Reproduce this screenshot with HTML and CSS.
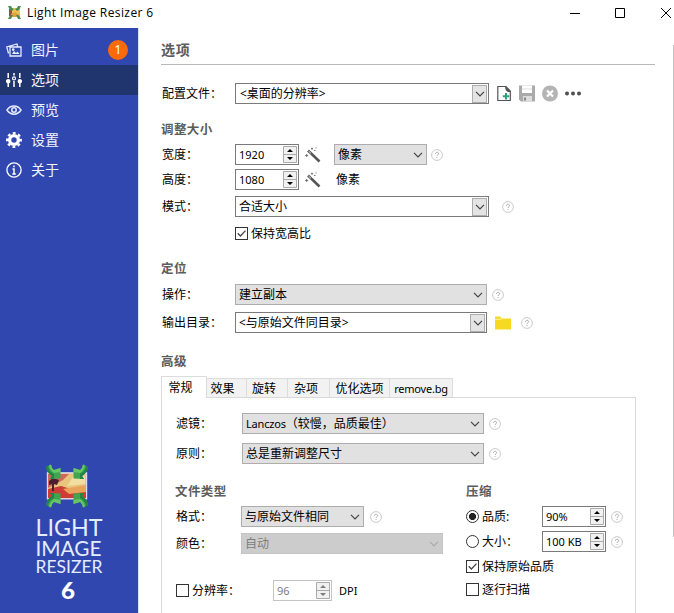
FILE: index.html
```html
<!DOCTYPE html>
<html lang="zh-CN">
<head>
<meta charset="utf-8">
<title>Light Image Resizer 6</title>
<link rel="stylesheet" href="styles.css">
</head>
<body>
<svg class="defs" aria-hidden="true">
  <symbol id="logo" viewBox="0 0 44 44">
    <path d="M2 8.5H42V35H2Z" fill="#e8c57c"/>
    <path d="M3 10H24L18 16 3 24Z" fill="#d0675a"/>
    <path d="M3 25L16 22 29 26 41 24V34H3Z" fill="#cc3d38"/>
    <path d="M18 25L41 21V28L24 30Z" fill="#e9a35a"/>
    <path d="M4 17L8 14 14 16 12 21 9 20V27H7V20L4 21Z" fill="#4b1f2c"/>
    <path d="M28 13L40 12V20L22 22Z" fill="#f1deA0"/>
    <path d="M5 8.8H2.4V34.8H5M39 8.8H41.6V34.8H39M15 8.8H29M15 34.8H29" stroke="#dcdcf5" stroke-width="1.2" fill="none"/>
    <g id="arrow"><path d="M1 3L6 .5Q7 5 9 6L15.500 4V14.500L5 15 7 12Q2 9 1 3Z" fill="#3fa650"/><path d="M6 .5Q7 5 9 6L15.500 4V8L9 9Q5 6 4 1.500Z" fill="#69c665"/><path d="M1 3Q2 9 7 12L5 15 9 14.800V10Q4 8 3 2Z" fill="#1f8446"/></g>
    <use href="#arrow" transform="translate(44 0) scale(-1 1)"/>
    <use href="#arrow" transform="translate(0 44) scale(1 -1)"/>
    <use href="#arrow" transform="translate(44 44) scale(-1 -1)"/>
  </symbol>
  <symbol id="logo-small" viewBox="0 0 13 13">
    <path d="M1 2H12V11H1Z" fill="#ecc65a"/>
    <path d="M1 3H4V10H1Z" fill="#9a5137"/>
    <path d="M3 8L7 6 12 9V11H3Z" fill="#e5a13d"/>
    <path d="M0 0H3L4 2 6 3 4 5 2 4ZM13 0H10L9 2 7 3 9 5 11 4ZM0 13H3L4 11 5 9 3 9 1 11ZM13 13H10L9 11 8 9 10 9 12 11Z" fill="#4a8c55"/>
  </symbol>
  <symbol id="help" viewBox="0 0 12 12">
    <circle cx="6" cy="6" r="5.4" fill="#fff" stroke="#c4c4c4" stroke-width=".9"/>
    <path d="M4.400 4.900C4.400 2.800 7.600 2.800 7.600 4.700 7.600 5.800 6 5.800 6 7M6 8.100V9" fill="none" stroke="#aaa" stroke-width="1"/>
  </symbol>
  <symbol id="wand" viewBox="0 0 16 16">
    <path d="M3 3.500L14.500 14.500" stroke="#555" stroke-width="2.500"/>
    <path d="M3.500 4L6 6.400" stroke="#fff" stroke-width=".8"/>
    <path d="M.2 8.500H3.200M1.700 7V10M6 1.700H8M7 .7V2.700M10.500 1H11.500M9 3.500H10.500" stroke="#777" stroke-width="1"/>
  </symbol>
  <symbol id="chev" viewBox="0 0 10 6"><path d="M1 .8L5 4.800 9 .8" fill="none" stroke="currentColor" stroke-width="1.200"/></symbol>
  <symbol id="spin" viewBox="0 0 14 17">
    <path d="M.5 .5H13.500V16.500H.5ZM.5 8.500H13.500" fill="#f1f1f1" stroke="#aaa"/>
    <path d="M4 6H10L7 3ZM4 11H10L7 14Z" fill="currentColor"/>
  </symbol>
  <symbol id="tick" viewBox="0 0 13 13"><path d="M2.700 6.300L5.400 9 10.500 3.600" fill="none" stroke="#444" stroke-width="1.300"/></symbol>
</svg>

<div class="window">
  <header class="titlebar">
    <svg class="app-icon"><use href="#logo-small"/></svg>
    <span class="app-title">Light Image Resizer 6</span>
    <svg class="window-controls" viewBox="0 0 102 12" fill="none" stroke="#000"><path d="M0 6.500H10M45.500 1.500H54.500V10.500H45.500ZM91 1L101 11M101 1L91 11"/></svg>
  </header>
  <div class="body">
    <nav class="sidebar">
      <ul class="menu">
        <li class="item"><svg viewBox="0 0 16 16" fill="none" stroke="#e6ecff" stroke-width="1.300"><path d="M4 14H15V5H4ZM2.500 11.500L.8 5 11 2 11.600 4.500"/><path d="M6 12L8 9 10 11 11.500 9.500 13.500 12Z" fill="#e6ecff" stroke="none"/><circle cx="7.200" cy="7.600" r=".7"/></svg><span>图片</span><b class="badge">1</b></li>
        <li class="item active"><svg viewBox="0 0 16 16" fill="none" stroke="#fff" stroke-width="1.500"><path d="M2.200 1V6M2.200 11V15M8 1V3.500M8 9V15M13.800 1V6M13.800 11V15"/><circle cx="2.200" cy="9.200" r="1.500" fill="#fff"/><circle cx="8" cy="6.400" r="1.500" stroke-width="1.200"/><circle cx="13.800" cy="9.200" r="1.500" fill="#fff"/></svg><span>选项</span></li>
        <li class="item"><svg viewBox="0 0 16 16" fill="none" stroke="#e6ecff" stroke-width="1.500"><path d="M1 8C4.500 2.500 11.500 2.500 15 8 11.500 13.500 4.500 13.500 1 8Z"/><circle cx="8" cy="8" r="2.200"/></svg><span>预览</span></li>
        <li class="item"><svg viewBox="0 0 16 16" fill="none" stroke="#fff"><circle cx="8" cy="8" r="4.400" stroke-width="3.400"/><circle cx="8" cy="8" r="6.900" stroke-width="2.100" stroke-dasharray="2.900 2.520" stroke-dashoffset="1.450"/></svg><span>设置</span></li>
        <li class="item"><svg viewBox="0 0 16 16" fill="none" stroke="#fff"><circle cx="8" cy="8" r="7.100" stroke-width="1.300"/><path d="M6.500 7H8V12M6.300 12H9.800M8 3.600V5.300" stroke-width="1.500"/></svg><span>关于</span></li>
      </ul>
      <div class="brand">
        <svg class="brand-logo"><use href="#logo"/></svg>
        <svg class="brand-name" viewBox="0 0 70 97">
          <text x="1.500" y="24" font-size="24" textLength="67" lengthAdjust="spacingAndGlyphs">LIGHT</text>
          <text x="1.500" y="43.500" font-size="20.500" textLength="66" lengthAdjust="spacingAndGlyphs">IMAGE</text>
          <text x="1.500" y="61" font-size="17" textLength="67" lengthAdjust="spacingAndGlyphs">RESIZER</text>
          <text class="brand-version" x="27" y="87" font-size="22" textLength="14" lengthAdjust="spacingAndGlyphs">6</text>
        </svg>
      </div>
    </nav>

    <main class="main">
      <h1>选项</h1>
      <div class="row profile">
        <label>配置文件：</label>
        <div class="combo w254 indent"><span>&lt;桌面的分辨率&gt;</span><i><svg><use href="#chev"/></svg></i></div>
        <svg class="tools" viewBox="0 0 84 18">
          <path d="M.8 1.500H9L13.300 6V15.500H.8Z" fill="#fff" stroke="#555" stroke-width="1.200"/><path d="M8 1L14 7H11Q8 6 8 1Z" fill="#555"/><path d="M9 8V14.500M5.800 11.200H12.200" stroke="#27a477" stroke-width="2"/>
          <path d="M22 .5H38V16.500H24L22 14.500Z" fill="#aaa"/><path d="M25 .5H35V8H25Z" fill="#fff"/><path d="M25 4H35" stroke="#ddd"/><path d="M26 11H35V16.500H26Z" fill="#ddd"/><path d="M27 12.500H29V15.500H27Z" fill="#888"/>
          <circle cx="53" cy="8.500" r="8" fill="#b4b4b4"/><path d="M50 5.500L56 11.500M56 5.500L50 11.500" stroke="#fff" stroke-width="2.200"/>
          <circle cx="70" cy="8.500" r="2" fill="#505050"/><circle cx="76" cy="8.500" r="2" fill="#505050"/><circle cx="82" cy="8.500" r="2" fill="#505050"/>
        </svg>
      </div>

      <h2 class="h-size">调整大小</h2>
      <div class="row">
        <label>宽度：</label>
        <div class="spinner"><span>1920</span><svg><use href="#spin"/></svg></div>
        <svg class="wand"><use href="#wand"/></svg>
        <div class="select w93"><span>像素</span><svg><use href="#chev"/></svg></div>
        <svg class="help near"><use href="#help"/></svg>
      </div>
      <div class="row height-row">
        <label>高度：</label>
        <div class="spinner"><span>1080</span><svg><use href="#spin"/></svg></div>
        <svg class="wand"><use href="#wand"/></svg>
        <span class="unit">像素</span>
      </div>
      <div class="row mode">
        <label>模式：</label>
        <div class="combo w254"><span>合适大小</span><i><svg><use href="#chev"/></svg></i></div>
        <svg class="help far"><use href="#help"/></svg>
      </div>
      <div class="row ratio"><span class="check"><svg><use href="#tick"/></svg></span><span>保持宽高比</span></div>

      <h2 class="h-dest">定位</h2>
      <div class="row">
        <label>操作：</label>
        <div class="select w252"><span>建立副本</span><svg><use href="#chev"/></svg></div>
        <svg class="help"><use href="#help"/></svg>
      </div>
      <div class="row output">
        <label>输出目录：</label>
        <div class="combo w252"><span>&lt;与原始文件同目录&gt;</span><i><svg><use href="#chev"/></svg></i></div>
        <svg class="folder" viewBox="0 0 16 14"><path d="M0 .5H5L7 2.500H16V13.500H0Z" fill="#f8d922"/><path d="M0 3.300H6L7.500 2" fill="none" stroke="#fff09a"/></svg>
        <svg class="help after-folder"><use href="#help"/></svg>
      </div>

      <h2 class="h-adv">高级</h2>
      <div class="tabs">
        <span class="tab on">常规</span><span class="tab t40">效果</span><span class="tab t41">旋转</span><span class="tab t42">杂项</span><span class="tab t60">优化选项</span><span class="tab t63"><span class="latin">remove.bg</span></span>
      </div>
      <section class="panel">
        <div class="row">
          <label>滤镜：</label>
          <div class="select w242"><span><span class="latin">Lanczos</span>（较慢，品质最佳）</span><svg><use href="#chev"/></svg></div>
          <svg class="help"><use href="#help"/></svg>
        </div>
        <div class="row rule">
          <label>原则：</label>
          <div class="select w242"><span>总是重新调整尺寸</span><svg><use href="#chev"/></svg></div>
          <svg class="help"><use href="#help"/></svg>
        </div>
        <div class="columns">
          <div class="file-type">
            <h2>文件类型</h2>
            <div class="row">
              <label>格式：</label>
              <div class="select w123"><span>与原始文件相同</span><svg><use href="#chev"/></svg></div>
              <svg class="help format-help"><use href="#help"/></svg>
            </div>
            <div class="row color">
              <label>颜色：</label>
              <div class="select w202 disabled"><span>自动</span><svg><use href="#chev"/></svg></div>
            </div>
            <div class="row resolution">
              <span class="check"></span><span class="res-label">分辨率：</span>
              <div class="spinner disabled"><span>96</span><svg><use href="#spin"/></svg></div>
              <span class="dpi">DPI</span>
            </div>
          </div>
          <div class="compression">
            <h2>压缩</h2>
            <div class="row">
              <span class="radio on"></span><span class="radio-label">品质:</span>
              <div class="spinner"><span>90%</span><svg><use href="#spin"/></svg></div>
              <svg class="help"><use href="#help"/></svg>
            </div>
            <div class="row size">
              <span class="radio"></span><span class="radio-label">大小：</span>
              <div class="spinner"><span>100 KB</span><svg><use href="#spin"/></svg></div>
              <svg class="help"><use href="#help"/></svg>
            </div>
            <div class="row keep"><span class="check"><svg><use href="#tick"/></svg></span><span>保持原始品质</span></div>
            <div class="row scan"><span class="check"></span><span>逐行扫描</span></div>
          </div>
        </div>
      </section>
    </main>
    <div class="scroll"></div>
  </div>
</div>
</body>
</html>
```
FILE: styles.css
```css
* { box-sizing: border-box; }
body { margin: 0; background: #fff; color: #000; font: 12px/20px "Noto Sans", "Noto Sans CJK SC", sans-serif; overflow: hidden; }
.defs { position: absolute; width: 0; height: 0; }
svg { flex: none; display: block; }
.window { width: 674px; height: 613px; overflow: hidden; }

.titlebar { height: 28px; display: flex; align-items: center; padding: 0 2px 3px 8px; }
.app-icon { width: 13px; height: 13px; }
.app-title { margin-left: 6px; font: 12px/20px "Open Sans", sans-serif; letter-spacing: .4px; color: #000; }
.window-controls { width: 102px; height: 12px; margin-left: auto; }

.body { display: flex; height: 585px; }
.sidebar { width: 138px; flex: none; background: #3047af; display: flex; flex-direction: column; padding-top: 7px; color: #f1f4ff; }
.menu { list-style: none; margin: 0; padding: 0; }
.item { height: 30px; display: flex; align-items: center; padding: 0 10px 0 6px; font-size: 14px; }
.item svg { width: 16px; height: 16px; margin-right: 9px; }
.active { background: #20356e; }
.badge { width: 20px; height: 20px; margin-left: auto; border-radius: 50%; background: #fc6a0c; color: #fff; font: 12px/20px "Noto Sans", sans-serif; text-align: center; }
.brand { margin-top: 279px; }
.brand-logo { width: 44px; height: 44px; margin-left: 45px; }
.brand-name { width: 70px; height: 97px; margin: 4px 0 0 34px; font-family: Lato, sans-serif; fill: #e6ecff; overflow: visible; }
.brand-version { font-weight: 900; fill: #fff; }

.main { flex: 1; border-left: 1px solid #dfe2ee; margin-right: 1px; padding-left: 22px; }
h1 { width: 494px; height: 37px; margin: 0; border-bottom: 1px solid #b9b9b9; padding-top: 12px; font-size: 14px; line-height: 20px; font-weight: 700; color: #5c5c5c; letter-spacing: .8px; }
h2 { margin: 0; height: 20px; padding-top: 1px; font-size: 12.500px; line-height: 20px; font-weight: 700; color: #5c5c5c; letter-spacing: .4px; }
.row { display: flex; align-items: center; height: 21px; white-space: nowrap; }
.row label { width: 74px; flex: none; padding-left: 1px; }
.profile { margin-top: 18px; }
.h-size { margin-top: 15px; margin-bottom: 5px; }
.height-row { margin-top: 4px; }
.mode { margin-top: 6px; }
.ratio { margin-top: 6px; padding-left: 74px; }
.h-dest { margin-top: 14px; margin-bottom: 6px; }
.output { margin-top: 7px; }
.h-adv { margin-top: 18px; }

.combo, .select, .spinner { display: flex; align-items: center; justify-content: space-between; flex: none; height: 21px; border: 1px solid #7a7a7a; background: #fff; padding-left: 3px; line-height: 19px; }
.combo.indent { padding-left: 4px; }
.combo i { width: 15px; height: 18px; margin-right: 1px; border: 1px solid #adadad; background: #e4e4e4; display: flex; align-items: center; justify-content: center; }
.combo i svg, .select svg { width: 10px; height: 6px; color: #444; }
.select { background: #e1e1e1; border-color: #adadad; padding-right: 3px; }
.spinner { width: 64px; font-size: 11px; }
.spinner svg { width: 14px; height: 17px; margin-right: 1px; }
.w254 { width: 254px; }
.w252 { width: 252px; }
.w242 { width: 242px; }
.w202 { width: 202px; }
.w123 { width: 123px; }
.w93 { width: 93px; }
.disabled { color: #7d7d7d; border-color: #c4c4c4; }
.select.disabled { background: #ccc; }
.select.disabled svg { color: #aaa; }
.latin { font-size: 11px; letter-spacing: -.2px; }
.tools { width: 84px; height: 18px; margin-left: 8px; }
.wand { width: 16px; height: 16px; margin-left: 6px; margin-right: 13px; }
.unit { padding-left: 2px; }
.help { width: 12px; height: 12px; margin-left: 5px; }
.near { margin-left: 4px; }
.far { margin-left: 13px; }
.format-help { margin-left: 6px; }
.folder { width: 16px; height: 14px; margin-left: 8px; }
.after-folder { margin-left: 10px; }
.check { width: 13px; height: 13px; flex: none; border: 1px solid #333; margin-right: 3px; background: #fff; }
.check svg { width: 13px; height: 13px; margin: -1px; }
.radio { width: 13px; height: 13px; flex: none; border: 1px solid #333; border-radius: 50%; margin-right: 3px; }
.radio.on { background: radial-gradient(circle, #222 0 3.200px, #fff 3.900px); }
.radio-label { width: 60px; }

.tabs { display: flex; align-items: flex-end; height: 26px; }
.tab { height: 19px; border: 1px solid #dcdcdc; border-left: 0; border-bottom: 0; background: #f2f2f2; text-align: center; line-height: 20px; white-space: nowrap; }
.tab.on { position: relative; width: 46px; height: 22px; margin-bottom: -1px; padding-right: 7px; border-left: 1px solid #dcdcdc; background: #fff; line-height: 21px; }
.t40 { width: 40px; padding-right: 8px; }
.t41 { width: 41px; padding-right: 6px; }
.t42 { width: 42px; padding-right: 5px; }
.t60 { width: 60px; }
.t63 { width: 63px; }
.panel { width: 475px; height: 230px; border: 1px solid #d9d9d9; padding: 15px 0 0 13px; }
.panel .row label { width: 67px; }
.rule { margin-top: 9px; }
.columns { display: flex; margin-top: 17px; }
.columns .row label { width: 66px; }
.columns h2 { margin-bottom: 5px; }
.file-type { width: 291px; }
.color { margin-top: 6px; }
.resolution { margin-top: 26px; padding-left: 1px; }
.res-label { width: 81px; }
.resolution .spinner { width: 59px; }
.dpi { margin-left: 7px; font-size: 11px; }
.size { margin-top: 4px; }
.keep { margin-top: 4px; }
.scan { margin-top: 2px; }
.scroll { width: 1px; height: 492px; margin-top: 17px; background: #c3c3c3; }
```
